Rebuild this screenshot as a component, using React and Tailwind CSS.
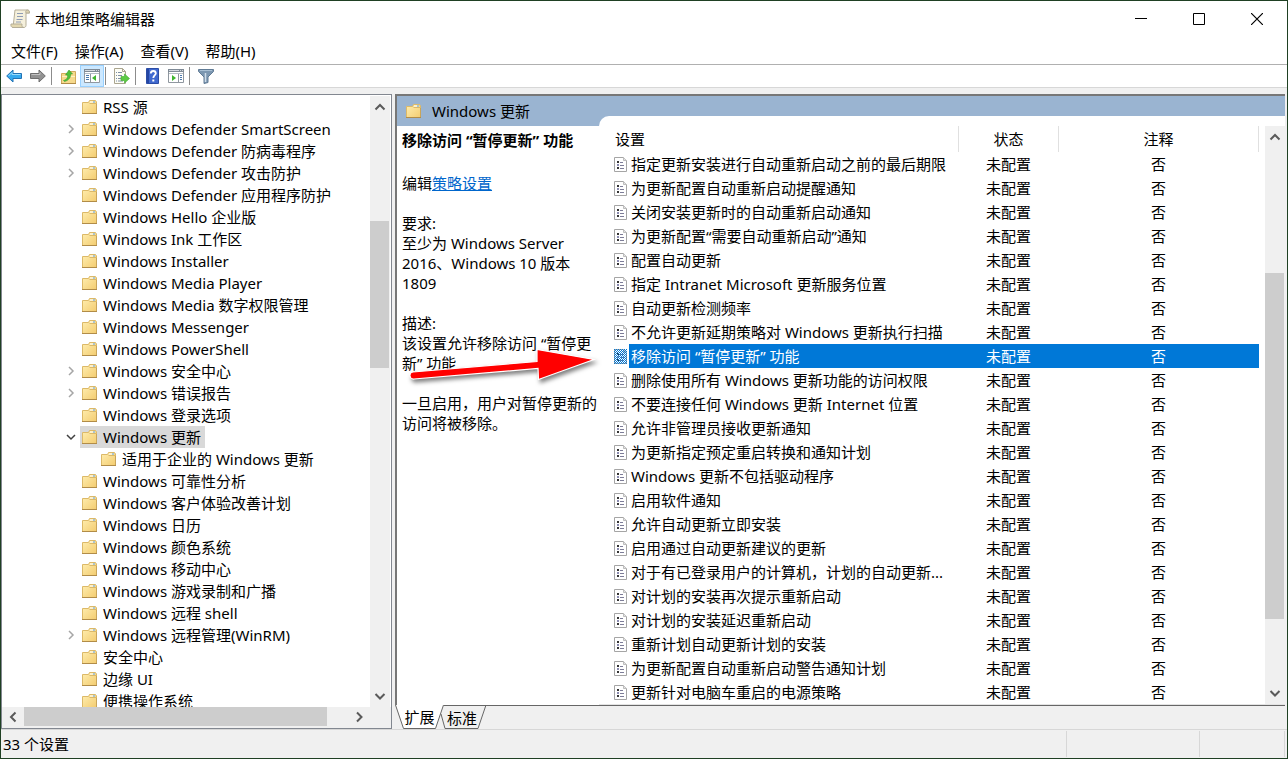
import React, { useState } from 'react';

const treeItems = [
  { name: 'RSS 源' },
  { name: 'Windows Defender SmartScreen', arrow: 'closed' },
  { name: 'Windows Defender 防病毒程序', arrow: 'closed' },
  { name: 'Windows Defender 攻击防护', arrow: 'closed' },
  { name: 'Windows Defender 应用程序防护' },
  { name: 'Windows Hello 企业版' },
  { name: 'Windows Ink 工作区' },
  { name: 'Windows Installer' },
  { name: 'Windows Media Player' },
  { name: 'Windows Media 数字权限管理' },
  { name: 'Windows Messenger' },
  { name: 'Windows PowerShell' },
  { name: 'Windows 安全中心', arrow: 'closed' },
  { name: 'Windows 错误报告', arrow: 'closed' },
  { name: 'Windows 登录选项' },
  { name: 'Windows 更新', arrow: 'open' },
  { name: '适用于企业的 Windows 更新', child: true },
  { name: 'Windows 可靠性分析' },
  { name: 'Windows 客户体验改善计划' },
  { name: 'Windows 日历' },
  { name: 'Windows 颜色系统' },
  { name: 'Windows 移动中心' },
  { name: 'Windows 游戏录制和广播' },
  { name: 'Windows 远程 shell' },
  { name: 'Windows 远程管理(WinRM)', arrow: 'closed' },
  { name: '安全中心' },
  { name: '边缘 UI' },
  { name: '便携操作系统' },
];

const settings = [
  '指定更新安装进行自动重新启动之前的最后期限',
  '为更新配置自动重新启动提醒通知',
  '关闭安装更新时的自动重新启动通知',
  '为更新配置“需要自动重新启动”通知',
  '配置自动更新',
  '指定 Intranet Microsoft 更新服务位置',
  '自动更新检测频率',
  '不允许更新延期策略对 Windows 更新执行扫描',
  '移除访问 “暂停更新” 功能',
  '删除使用所有 Windows 更新功能的访问权限',
  '不要连接任何 Windows 更新 Internet 位置',
  '允许非管理员接收更新通知',
  '为更新指定预定重启转换和通知计划',
  'Windows 更新不包括驱动程序',
  '启用软件通知',
  '允许自动更新立即安装',
  '启用通过自动更新建议的更新',
  '对于有已登录用户的计算机，计划的自动更新...',
  '对计划的安装再次提示重新启动',
  '对计划的安装延迟重新启动',
  '重新计划自动更新计划的安装',
  '为更新配置自动重新启动警告通知计划',
  '更新针对电脑车重启的电源策略',
];

const FolderIcon = () => (
  <svg width="15" height="15" viewBox="0 0 15 15" className="shrink-0" aria-hidden="true">
    <defs>
      <linearGradient id="folder" x1="0" y1="0" x2="1" y2="1">
        <stop offset="0" stopColor="#ffeeb0" />
        <stop offset="1" stopColor="#f3cc70" />
      </linearGradient>
    </defs>
    <path d="M.5 2.500H6.500l1-2h6l1 1.500v11.500H.5z" fill="url(#folder)" stroke="#dcb968" />
    <path d="M7.500 3.500h7" stroke="#dcb968" />
    <path d="M8 2h5" stroke="#fff" />
    <path d="M11 2h2" stroke="#5b9bd5" />
    <path d="M0 13.500h15" stroke="#b18c48" />
    <path d="M14.500 4v9" stroke="#c9a55a" />
  </svg>
);

const SettingIcon = ({ selected }) => (
  <svg width="13" height="15" viewBox="0 0 13 15" aria-hidden="true">
    <defs>
      <pattern id="dither" width="2" height="2" patternUnits="userSpaceOnUse">
        <path d="M0 0h1v1H0zM1 1h1v1H1z" fill="#0078d7" />
      </pattern>
    </defs>
    <path d="M.5.5h9l3 3v11H.5z" fill="#fff" stroke="#a5a5a5" />
    <path d="M9.500.5v3h3" fill="#e4e4e4" stroke="#bdbdbd" />
    <path d="M3 4h2v2H3zM3 10h2v2H3z" fill="#333" />
    <path d="M3 7h2v2H3z" fill="#8a8ab0" />
    <path d="M6 5.500h3M6 8.500h4M6 11.500h4" stroke="#7d7d98" />
    {selected && <path d="M0 0h13v15H0z" fill="url(#dither)" />}
  </svg>
);

const chevrons = {
  up: 'M1.500 8.500 6 4l4.500 4.500',
  down: 'M1.500 4 6 8.500 10.500 4',
  left: 'M8.500 1.500 4 6l4.500 4.500',
  right: 'M4 1.500 8.500 6 4 10.500',
};

const Chevron = ({ dir }) => (
  <svg width="12" height="12" viewBox="0 0 12 12" fill="none" stroke="#5a5a5a" strokeWidth="2" aria-hidden="true">
    <path d={chevrons[dir]} />
  </svg>
);

const VerticalScrollbar = ({ before, thumb, after }) => (
  <div className="flex w-5 shrink-0 flex-col bg-[#f0f0f0] pr-px">
    <button type="button" aria-label="向上滚动" className="flex h-[22px] items-center justify-center">
      <Chevron dir="up" />
    </button>
    <div className="flex flex-1 flex-col">
      <div style={{ flexGrow: before }} />
      <div className="bg-[#cdcdcd]" style={{ flexGrow: thumb }} />
      <div style={{ flexGrow: after }} />
    </div>
    <button type="button" aria-label="向下滚动" className="flex h-[22px] items-center justify-center">
      <Chevron dir="down" />
    </button>
  </div>
);

const Separator = () => (
  <div className="pl-px pr-1">
    <div className="h-[18px] w-px bg-[#8c8c8c]" />
  </div>
);

const ToolButton = ({ label, active, children }) => (
  <button
    type="button"
    aria-label={label}
    className={`flex h-[22px] w-6 items-center justify-center ${active ? 'border border-[#99d1ff] bg-[#cce8ff]' : ''}`}
  >
    {children}
  </button>
);

const PanelIcon = ({ flip }) => (
  <svg width="16" height="14" viewBox="0 0 16 14" aria-hidden="true">
    <path d="M.5.5h15v13H.5z" fill="#fff" stroke="#8f979f" />
    <path d="M0 0h16v3H0z" fill="#7f8a96" />
    <path d="M1 1.500h10M12 1.500h1M14 1.500h1" stroke="#d5dae0" />
    <path d="M1 4.500h14" stroke="#b4bcc5" />
    {flip ? (
      <>
        <path d="M10.500 5v8" stroke="#8f979f" />
        <path d="M12 6.500h2M12 8.500h2M12 10.500h2" stroke="#4978ad" />
        <path d="M4 6v6l4-3z" fill="#3fb52f" />
      </>
    ) : (
      <>
        <path d="M6.500 5v8" stroke="#8f979f" />
        <path d="M2 6.500h3M2 8.500h3M2 10.500h3" stroke="#4978ad" />
        <path d="M12 6v6L8 9z" fill="#3fb52f" />
      </>
    )}
  </svg>
);

const TitleBar = () => (
  <header className="flex h-9 shrink-0 pr-px">
    <div className="flex flex-1 items-center gap-1 pl-2">
      <svg width="22" height="22" viewBox="0 0 22 22" aria-hidden="true">
        <path d="M6 2h12c2 0 2.500 1 2.500 3H17v12.500c0 1-1 2-2 2H4z" fill="#f5f0dc" stroke="#b5ae98" />
        <path d="M18 2c-1.500.5-1.500 2-1 3h3.500C20.500 3 20 2 18 2z" fill="#ddd3b0" stroke="#b5ae98" />
        <path d="M2 16h11c-.5 2 .5 3.500 2 3.500H4c-1.500 0-2.500-1.500-2-3.500z" fill="#e3d8b0" stroke="#b5ae98" />
        <path d="M8 5.500h6M8 8.500h6M7.500 11.500h6M7 14h5" stroke="#8f9cb5" />
      </svg>
      <h1>本地组策略编辑器</h1>
    </div>
    <button type="button" aria-label="最小化" className="flex w-[58px] items-center justify-center">
      <svg width="12" height="12" viewBox="0 0 12 12" stroke="#000">
        <path d="M0 5.500h12" />
      </svg>
    </button>
    <button type="button" aria-label="最大化" className="flex w-[58px] items-center justify-center">
      <svg width="12" height="12" viewBox="0 0 12 12" fill="none" stroke="#000">
        <path d="M.5.5h11v11H.5z" />
      </svg>
    </button>
    <button type="button" aria-label="关闭" className="flex w-[58px] items-center justify-center">
      <svg width="12" height="12" viewBox="0 0 12 12" stroke="#000" strokeWidth="1.200">
        <path d="M0 0l12 12M12 0 0 12" />
      </svg>
    </button>
  </header>
);

const Toolbar = () => (
  <div className="flex h-[23px] shrink-0 items-center border-b border-[#d7d7d7] pl-px">
    <ToolButton label="后退">
      <svg width="16" height="14" viewBox="0 0 16 14" aria-hidden="true">
        <path d="M.7 7l6.300-6v3.500h8.500v5H7V13z" fill="#35a9ee" stroke="#2272b4" strokeLinejoin="round" />
        <path d="M2.500 7 6 3.500v2h8.500" fill="none" stroke="#9bdcfb" />
      </svg>
    </ToolButton>
    <ToolButton label="前进">
      <svg width="16" height="14" viewBox="0 0 16 14" aria-hidden="true">
        <path d="M15.300 7 9 1v3.500H.5v5H9V13z" fill="#929292" stroke="#6e6e6e" strokeLinejoin="round" />
        <path d="M1.500 5.500H10v-2" fill="none" stroke="#c2c2c2" />
      </svg>
    </ToolButton>
    <Separator />
    <ToolButton label="上一级">
      <svg width="15" height="15" viewBox="0 0 15 15" aria-hidden="true">
        <path d="M.5 4.500H7l2-2h5.500v12H.5z" fill="#f6d98c" stroke="#d0ab5c" />
        <path d="M1 7.500h13" stroke="#fff1bf" />
        <path d="M0 14.500h15" stroke="#b18c48" />
        <path d="M2.500 11.500c3.500-1 4.500-3 4-5.500H4.500l3.500-5 3.500 4H9.500c.5 3.500-2 6.500-6 7.500z" fill="#4fc23b" stroke="#3b9a30" strokeWidth=".6" />
      </svg>
    </ToolButton>
    <ToolButton label="显示/隐藏控制台树" active>
      <PanelIcon />
    </ToolButton>
    <Separator />
    <ToolButton label="导出列表">
      <svg width="16" height="16" viewBox="0 0 16 16" aria-hidden="true">
        <path d="M.5.5h8l3 3v12H.5z" fill="#fdfdf5" stroke="#aaa58f" />
        <path d="M8.500.5v3h3" fill="none" stroke="#aaa58f" />
        <path d="M2 4.500h1M2 7.500h1M2 10.500h1M2 13h1M4 4.500h4M4 7.500h4M4 10.500h3M4 13h5" stroke="#7f8fa6" />
        <path d="M7 8.500h3.500V6l5 4.500-5 4.500v-2.500H7z" fill="#5ccb43" stroke="#4bb03c" strokeWidth=".7" />
      </svg>
    </ToolButton>
    <Separator />
    <ToolButton label="帮助">
      <svg width="13" height="16" viewBox="0 0 13 16" aria-hidden="true">
        <path d="M.5.5h12v15H.5z" fill="#4069cf" stroke="#2c4da6" />
        <path d="M1 1h2v14H1z" fill="#2446a3" />
        <path d="M4.800 5.500C4.800 3.500 6 3 7.300 3s2.500 1 2.500 2.500S7.300 7.500 7.300 10" fill="none" stroke="#fff" strokeWidth="1.800" />
        <path d="M6.300 11.500h2v2h-2z" fill="#fff" />
      </svg>
    </ToolButton>
    <ToolButton label="显示/隐藏操作窗格">
      <PanelIcon flip />
    </ToolButton>
    <Separator />
    <ToolButton label="筛选">
      <svg width="16" height="15" viewBox="0 0 16 15" aria-hidden="true">
        <path d="M.5.5h15v2L10 8v5.500l-4 1V8L.5 2.500z" fill="#7c97b1" stroke="#607b95" />
        <path d="M2 1.500h12" stroke="#a9c0d4" />
        <path d="M7.500 4v9" stroke="#d0deea" strokeWidth="1.500" />
      </svg>
    </ToolButton>
  </div>
);

const TreePanel = () => {
  const [current, setCurrent] = useState('Windows 更新');

  return (
    <nav className="flex w-[391px] shrink-0 flex-col border border-[#828790] bg-white">
      <div className="flex min-h-0 flex-1 pr-px pt-px">
        <ul className="min-w-0 flex-1 overflow-hidden">
          {treeItems.map((item) => (
            <li key={item.name} className={`flex h-[22px] items-center ${item.child ? 'pl-[79px]' : 'pl-[60px]'}`}>
              <span className="flex w-[18px] shrink-0 justify-center">
                {item.arrow === 'closed' && (
                  <svg width="8" height="10" viewBox="0 0 8 10" fill="none" stroke="#a6a6a6" strokeWidth="1.500">
                    <path d="M2 1l4 4-4 4" />
                  </svg>
                )}
                {item.arrow === 'open' && (
                  <svg width="10" height="8" viewBox="0 0 10 8" fill="none" stroke="#404040" strokeWidth="1.500">
                    <path d="M1 2l4 4 4-4" />
                  </svg>
                )}
              </span>
              <button
                type="button"
                onClick={() => setCurrent(item.name)}
                className={`flex h-[22px] items-center gap-[6px] whitespace-nowrap pl-[2px] pr-1 ${current === item.name ? 'bg-[#d9d9d9]' : ''}`}
              >
                <FolderIcon />
                {item.name}
              </button>
            </li>
          ))}
        </ul>
        <VerticalScrollbar before={103} thumb={147} after={317} />
      </div>
      <div className="flex h-[21px] shrink-0 bg-[#f0f0f0] pb-[2px] pr-5">
        <button type="button" aria-label="向左滚动" className="flex w-[22px] items-center justify-center">
          <Chevron dir="left" />
        </button>
        <div className="flex flex-1">
          <div className="grow-[15] bg-[#cdcdcd]" />
          <div className="grow" />
        </div>
        <button type="button" aria-label="向右滚动" className="flex w-6 items-center justify-center">
          <Chevron dir="right" />
        </button>
      </div>
    </nav>
  );
};

const Description = () => (
  <section className="relative w-[202px] shrink-0 pl-[5px] pt-1">
    <h2 className="whitespace-nowrap font-bold">移除访问 “暂停更新” 功能</h2>
    <p className="pt-[23px]">
      编辑<a href="#" className="text-[#0066cc] underline">策略设置</a>
    </p>
    <p className="pt-5">
      要求:<br />
      至少为 Windows Server 2016、Windows 10 版本 1809
    </p>
    <p className="pt-5">
      描述:<br />
      该设置允许移除访问 “暂停更新” 功能
    </p>
    <p className="pt-5">一旦启用，用户对暂停更新的访问将被移除。</p>
    {/* red pointer lying over the text */}
    <svg width="200" height="50" viewBox="0 0 200 50" className="absolute left-2 top-[218px] drop-shadow-[2px_3px_2px_rgba(0,0,0,0.5)]" aria-hidden="true">
      <path
        d="M8 28 132 17.500V5.500l57 10-55.500 20-.5-11L9 35a3.400 3.400 0 0 1-1-7z"
        fill="#f00"
        stroke="#fff"
        strokeWidth="1.200"
      />
    </svg>
  </section>
);

const SettingsTable = () => {
  const [selected, setSelected] = useState(8);

  return (
    <div className="flex min-w-0 flex-1">
      <div className="min-w-0 flex-1 overflow-hidden pr-[6px]">
        <table className="w-full table-fixed border-collapse">
          <colgroup>
            <col className="w-[30px]" />
            <col />
            <col className="w-[100px]" />
            <col className="w-[200px]" />
          </colgroup>
          <thead>
            <tr className="h-[26px]">
              <th colSpan={2} className="border-r border-[#e0e0e0] p-0 pl-4 text-left font-normal">设置</th>
              <th className="border-r border-[#e0e0e0] p-0 font-normal">状态</th>
              <th className="border-r border-[#e0e0e0] p-0 font-normal">注释</th>
            </tr>
          </thead>
          <tbody>
            {settings.map((name, i) => (
              <tr key={name} onClick={() => setSelected(i)} className="h-6">
                <td className="p-0 pl-[15px]">
                  <SettingIcon selected={selected === i} />
                </td>
                <td className={`truncate p-0 pl-[2px] ${selected === i ? 'bg-[#0078d7] text-white' : ''}`}>{name}</td>
                <td className={`p-0 text-center ${selected === i ? 'bg-[#0078d7] text-white' : ''}`}>未配置</td>
                <td className={`p-0 text-center ${selected === i ? 'bg-[#0078d7] text-white' : ''}`}>否</td>
              </tr>
            ))}
          </tbody>
        </table>
      </div>
      <VerticalScrollbar before={125} thumb={346} after={63} />
    </div>
  );
};

const Tabs = () => (
  <div className="flex h-6 shrink-0">
    <button type="button" className="relative w-[49px]">
      <svg width="49" height="24" viewBox="0 0 49 24" className="absolute inset-0" aria-hidden="true">
        <path d="M.5 0l8 23.500h32L48.500 0" fill="#fff" stroke="#666" />
      </svg>
      <span className="relative">扩展</span>
    </button>
    <button type="button" className="relative w-[42px] border-t border-[#666] pr-[6px]">
      <svg width="46" height="24" viewBox="0 0 46 24" className="absolute -left-1 -top-px" aria-hidden="true">
        <path d="M1 9l4 14.500h33L46 0" fill="none" stroke="#666" />
      </svg>
      <span className="relative">标准</span>
    </button>
    <div className="flex-1 border-t border-[#666]" />
  </div>
);

const App = () => {
  return (
    <div className="flex h-screen flex-col overflow-hidden border border-[#1f4023] bg-white font-['Noto_Sans','Noto_Sans_CJK_SC',sans-serif] text-[15px] leading-5 text-black">
      <TitleBar />
      <div className="flex h-7 shrink-0 items-center border-b border-[#b0b0b0] pl-[2px]">
        {['文件(F)', '操作(A)', '查看(V)', '帮助(H)'].map((menu) => (
          <button key={menu} type="button" className="pl-2 pr-[9px]">
            {menu}
          </button>
        ))}
      </div>
      <Toolbar />

      <main className="flex min-h-0 flex-1 gap-[3px] bg-[#f0f0f0] pt-[6px]">
        <TreePanel />
        <div className="flex min-w-0 flex-1 flex-col pr-[2px]">
          <div className="flex min-h-0 flex-1 flex-col border-l-2 border-t-2 border-[#777] bg-[#9ab4d1]">
            <div className="flex h-5 shrink-0 items-start pl-[9px]">
              <div className="flex h-[30px] items-center gap-[11px]">
                <FolderIcon />
                <span>Windows 更新</span>
              </div>
            </div>
            <div className="flex min-h-0 flex-1">
              <div className="flex shrink-0 pt-[10px]">
                <div className="flex bg-white">
                  <Description />
                </div>
              </div>
              <div className="flex min-w-0 flex-1 rounded-tl-[10px] border-b border-[#e3e3e3] bg-white pt-[10px]">
                <SettingsTable />
              </div>
            </div>
          </div>
          <Tabs />
        </div>
      </main>

      <footer className="flex h-[29px] shrink-0 items-center border-t border-[#d7d7d7] bg-[#f0f0f0] pl-[2px] pr-[2px]">
        <span className="flex-1">33 个设置</span>
        <div className="h-[26px] w-[133px] border-l border-[#d7d7d7]" />
        <div className="h-[26px] w-[86px] border-x border-[#d7d7d7]" />
      </footer>
    </div>
  );
};

export default App;
